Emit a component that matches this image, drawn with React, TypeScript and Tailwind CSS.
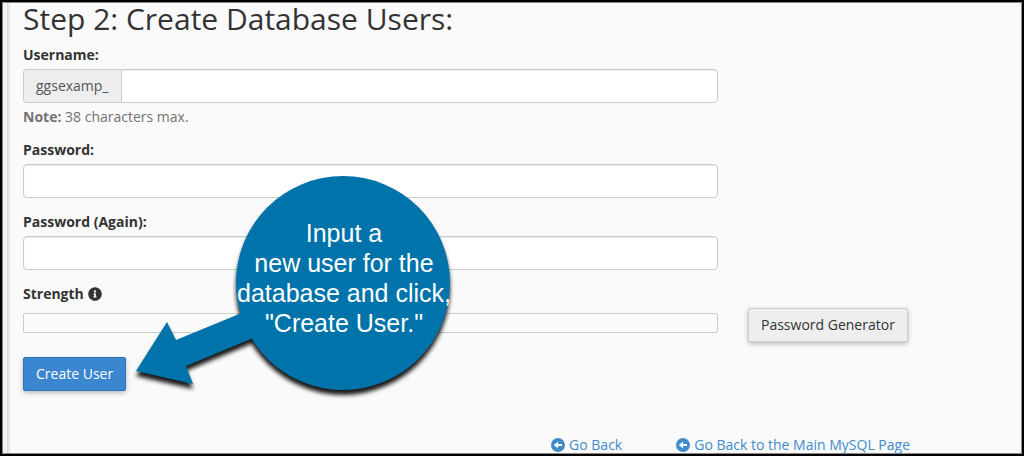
import React from 'react'
import { FaInfoCircle } from 'react-icons/fa'

const links = [
  { id: 1, title: 'Go Back' },
  { id: 2, title: 'Go Back to the Main MySQL Page' },
]

const inputStyle =
  'h-[34px] w-full rounded border border-[#ccc] bg-white px-3 shadow-[inset_0_1px_1px_rgba(0,0,0,0.08)] outline-none'

const ArrowCircle = () => (
  <svg viewBox="0 0 14 14" className="size-[14px]" fill="currentColor" aria-hidden="true">
    <path
      fillRule="evenodd"
      d="M7 0a7 7 0 1 0 0 14A7 7 0 0 0 7 0ZM2.8 7 7 3.6V5.9H11V8.1H7V10.4Z"
    />
  </svg>
)

const Callout = () => (
  <div className="pointer-events-none absolute left-[124px] top-[166px] h-[236px] w-[334px]">
    <svg
      viewBox="0 0 334 236"
      className="absolute inset-0 size-full overflow-visible drop-shadow-[0_5px_2px_rgba(0,0,0,0.9)]"
      fill="#0073aa"
      aria-hidden="true"
    >
      <circle cx="217" cy="115" r="107" />
      <path d="M10 203 41 154 50 172 118 144 132 168 60 198 67 216Z" />
    </svg>
    <p className="absolute left-[108px] top-[50px] w-[220px] text-center font-['Liberation_Sans'] text-[25px] leading-[30px] text-white">
      Input a<br />
      new user for the<br />
      database and click,<br />
      "Create User."
    </p>
  </div>
)

const App = () => {
  return (
    <div className="relative flex min-h-screen border-2 border-black bg-[#fafafa] font-['Open_Sans',sans-serif] text-sm leading-5 text-[#333]">
      <div className="flex flex-1 border border-[#888]">
        <div className="w-1 shrink-0 bg-[#f3f3f3]"></div>
        <div className="w-1 shrink-0 bg-linear-to-r from-[#d8d8d8] to-[#fafafa]"></div>
        <main className="min-w-0 flex-1 pl-3">
          <h1 className="mb-[11px] text-[30px] leading-[31px]">Step 2: Create Database Users:</h1>
          <form onSubmit={(e) => e.preventDefault()}>
            <div className="max-w-[695px]">
              <label htmlFor="user" className="mb-1 block font-bold">Username:</label>
              <div className="flex">
                <span className="flex h-[34px] items-center rounded-l border border-r-0 border-[#ccc] bg-[#eee] px-3 text-[#555]">
                  ggsexamp_
                </span>
                <input
                  id="user"
                  type="text"
                  maxLength={38}
                  className="h-[34px] min-w-0 flex-1 rounded-r border border-[#ccc] bg-white px-3 shadow-[inset_0_1px_1px_rgba(0,0,0,0.08)] outline-none"
                />
              </div>
              <p className="mt-1 mb-[13px] text-[#737373]">
                <strong>Note:</strong> 38 characters max.
              </p>
              <label htmlFor="password" className="mb-1 block font-bold">Password:</label>
              <input id="password" type="password" className={inputStyle} />
              <label htmlFor="again" className="mt-[14px] mb-1 block font-bold">Password (Again):</label>
              <input id="again" type="password" className={inputStyle} />
            </div>
            <div className="mt-[14px] flex items-center gap-1 font-bold">
              Strength <FaInfoCircle className="size-[14px]" />
            </div>
            <div className="mt-1 flex items-start gap-[30px]">
              <div className="mt-[5px] h-5 min-w-0 max-w-[695px] flex-1 rounded-xs border border-[#ccc]"></div>
              <button
                type="button"
                className="h-[34px] shrink-0 rounded-xs border border-[#ccc] bg-[#eee] px-3 shadow-[0_2px_5px_rgba(0,0,0,0.26)]"
              >
                Password Generator
              </button>
            </div>
            <button
              type="submit"
              className="mt-[15px] h-[34px] rounded-xs border border-[#2a75bb] bg-[#3a87d0] px-3 text-white shadow-[0_2px_5px_rgba(0,0,0,0.26)]"
            >
              Create User
            </button>
          </form>
          <nav className="mt-[46px] flex max-w-[887px] justify-end gap-[54px] leading-4 text-[#428bca]">
            {links.map((link) => (
              <a key={link.id} href="#" className="flex items-center gap-1">
                <ArrowCircle />
                {link.title}
              </a>
            ))}
          </nav>
        </main>
      </div>
      <Callout />
    </div>
  )
}

export default App
